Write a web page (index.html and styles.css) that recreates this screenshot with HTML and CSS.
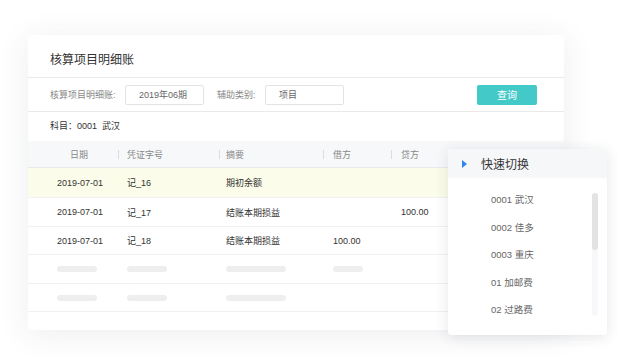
FILE: index.html
```html
<!DOCTYPE html>
<html lang="zh">
<head>
<meta charset="utf-8">
<link rel="stylesheet" href="styles.css">
</head>
<body>
<div class="page">
  <div class="card">
    <div class="title">核算项目明细账</div>
    <div class="filters">
      <span class="label">核算项目明细账:</span>
      <div class="input in1">2019年06期</div>
      <span class="label label2">辅助类别:</span>
      <div class="input in2">项目</div>
      <div class="spacer"></div>
      <button class="btn">查询</button>
    </div>
    <div class="subject">科目：0001&nbsp; 武汉</div>
    <div class="table">
      <div class="row head">
        <div class="c c1">日期</div>
        <div class="c c2 sep">凭证字号</div>
        <div class="c c3 sep">摘要</div>
        <div class="c c4 sep">借方</div>
        <div class="c c5 sep">贷方</div>
      </div>
      <div class="row hl">
        <div class="c c1">2019-07-01</div>
        <div class="c c2">记_16</div>
        <div class="c c3">期初余额</div>
        <div class="c c4"></div>
        <div class="c c5"></div>
      </div>
      <div class="row">
        <div class="c c1">2019-07-01</div>
        <div class="c c2">记_17</div>
        <div class="c c3">结账本期损益</div>
        <div class="c c4"></div>
        <div class="c c5">100.00</div>
      </div>
      <div class="row r3">
        <div class="c c1">2019-07-01</div>
        <div class="c c2">记_18</div>
        <div class="c c3">结账本期损益</div>
        <div class="c c4">100.00</div>
        <div class="c c5"></div>
      </div>
      <div class="row">
        <div class="c c1"><span class="sk w40"></span></div>
        <div class="c c2"><span class="sk w40"></span></div>
        <div class="c c3"><span class="sk w60"></span></div>
        <div class="c c4"><span class="sk w30"></span></div>
        <div class="c c5"></div>
      </div>
      <div class="row r5">
        <div class="c c1"><span class="sk w40"></span></div>
        <div class="c c2"><span class="sk w40"></span></div>
        <div class="c c3"><span class="sk w60"></span></div>
        <div class="c c4"></div>
        <div class="c c5"></div>
      </div>
    </div>
  </div>

  <div class="popup">
    <div class="pop-head">
      <svg class="tri" width="5" height="8" viewBox="0 0 5 8"><path d="M0 0 L5 4 L0 8 Z" fill="#2f86f0"/></svg>
      <span class="pop-title">快速切换</span>
    </div>
    <div class="pop-body">
      <div class="items">
        <div class="item">0001 武汉</div>
        <div class="item">0002 佳多</div>
        <div class="item">0003 重庆</div>
        <div class="item">01 加邮费</div>
        <div class="item">02 过路费</div>
      </div>
      <div class="scroll"><div class="thumb"></div></div>
    </div>
  </div>
</div>
</body>
</html>
```

FILE: styles.css
```css
* { box-sizing: border-box; }
html, body { margin: 0; padding: 0; background: #ffffff; }
body {
  font-family: "Liberation Sans", "Noto Sans CJK SC", sans-serif;
  color: #333;
}
.page {
  position: relative;
  width: 640px;
  height: 360px;
  overflow: hidden;
  padding: 35px 0 0 28px;
}
.card {
  width: 536px;
  height: 295px;
  background: #fff;
  border-radius: 3px;
  box-shadow: 0 4px 32px rgba(40, 50, 80, 0.09);
  display: flex;
  flex-direction: column;
}
.title {
  height: 43px;
  padding: 17px 22px 0;
  font-size: 12px;
  line-height: 16px;
  color: #333;
  border-bottom: 1px solid #e9e9e9;
}
.filters {
  height: 34px;
  display: flex;
  align-items: center;
  padding: 0 27px 0 22px;
  border-bottom: 1px solid #e9e9e9;
  font-size: 9px;
}
.label { color: #888; width: 75px; }
.label2 { width: 48px; margin-left: 13px; }
.input {
  height: 20px;
  width: 79px;
  border: 1px solid #e3e3e3;
  border-radius: 2px;
  padding-left: 13px;
  line-height: 18px;
  color: #666;
  font-size: 9px;
}
.spacer { flex: 1; }
.btn {
  width: 60px;
  height: 20px;
  border: none;
  border-radius: 2px;
  background: #44c9c9;
  color: #fff;
  font-family: inherit;
  font-size: 10px;
  padding: 0;
}
.subject {
  height: 29px;
  padding-left: 22px;
  line-height: 29px;
  font-size: 9px;
  color: #333;
}
.table { display: flex; flex-direction: column; font-size: 9px; }
.row {
  display: grid;
  grid-template-columns: 90px 101px 104px 68px 1fr;
  height: 29px;
  align-items: center;
  border-bottom: 1px solid #f1f1f1;
  color: #333;
}
.row.r3, .row.r5 { height: 28px; }
.head {
  height: 27px;
  background: #f7f8fa;
  border-bottom: 1px solid #e8e9ec;
  color: #888;
}
.hl { background: #fbfdea; height: 30px; }
.c { height: 100%; display: flex; align-items: center; white-space: nowrap; }
.c1 { padding-left: 29px; }
.head .c1 { padding-left: 42px; }
.c2 { padding-left: 9px; }
.c3 { padding-left: 7px; }
.c4 { padding-left: 10px; }
.c5 { padding-left: 10px; }
.sep {
  background-image: linear-gradient(#dcdcdc, #dcdcdc);
  background-size: 1px 9px;
  background-position: left center;
  background-repeat: no-repeat;
}
.sk {
  display: inline-block;
  height: 6px;
  border-radius: 3px;
  background: #eeeeee;
}
.w40 { width: 40px; }
.w60 { width: 60px; }
.w30 { width: 30px; }

.popup {
  position: absolute;
  left: 448px;
  top: 149px;
  width: 159px;
  height: 186px;
  background: #fff;
  border-radius: 3px;
  box-shadow: 0 2px 14px rgba(30, 40, 60, 0.12);
  overflow: hidden;
  display: flex;
  flex-direction: column;
}
.pop-head {
  height: 29px;
  background: #f6f7f9;
  display: flex;
  align-items: center;
  padding-left: 14px;
}
.tri { display: block; }
.pop-title { margin-left: 14px; font-size: 12px; color: #333; }
.pop-body {
  flex: 1;
  display: flex;
  padding-top: 8px;
}
.items { flex: 1; padding-left: 43px; }
.item {
  height: 27.5px;
  line-height: 27.5px;
  font-size: 9.5px;
  color: #666;
}
.scroll {
  width: 6px;
  height: 123px;
  margin: 7px 9px 0 0;
  background: #f7f8f9;
  border-radius: 3px;
}
.thumb {
  height: 57px;
  background: #e3e3e3;
  border-radius: 3px;
}
```
